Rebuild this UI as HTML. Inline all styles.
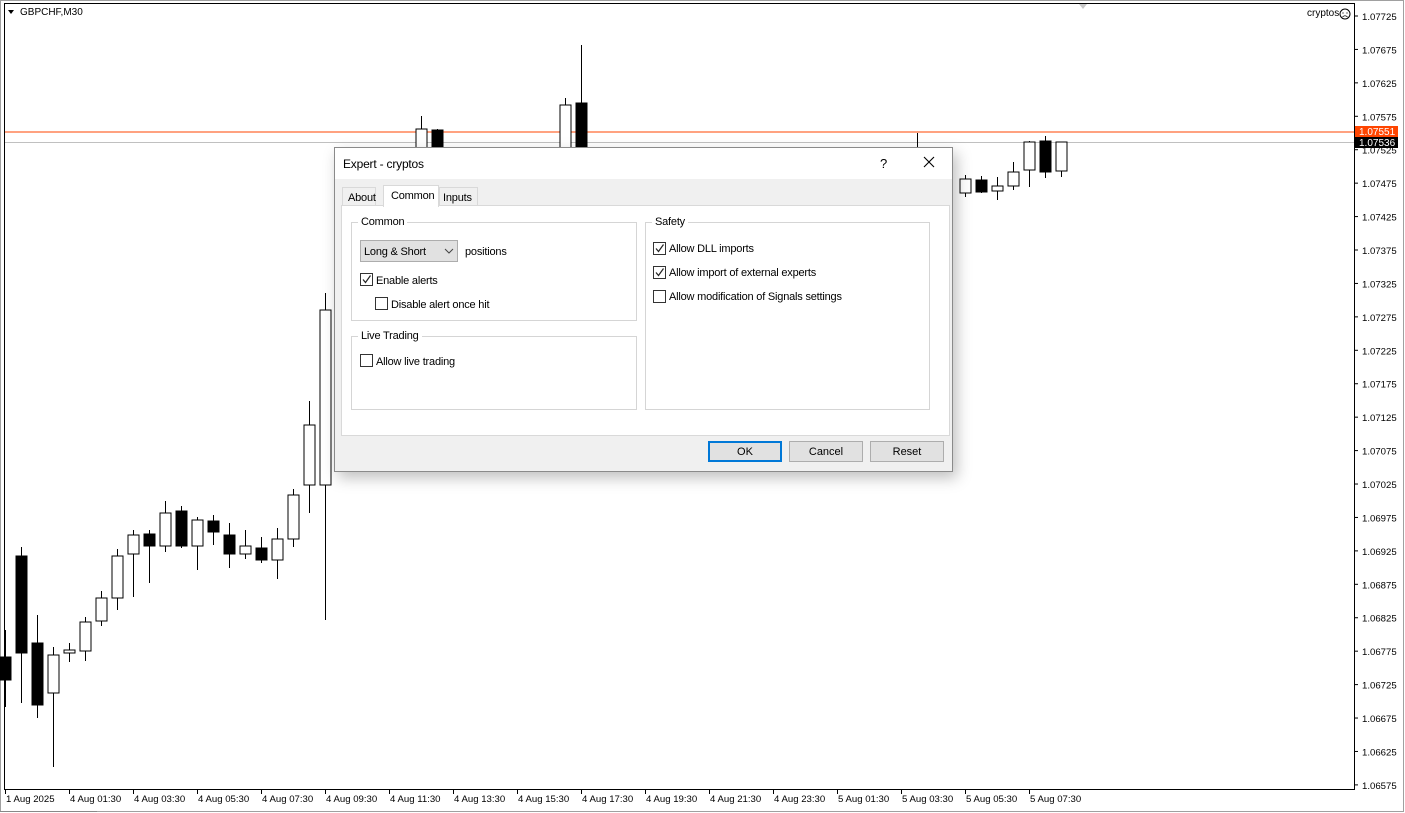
<!DOCTYPE html>
<html><head><meta charset="utf-8"><style>
*{margin:0;padding:0;box-sizing:border-box}
body{width:1405px;height:813px;background:#fff;position:relative;overflow:hidden;font-family:"Liberation Sans",sans-serif}
.t{position:absolute;font-size:12px;color:#000;white-space:nowrap}
.dlg{position:absolute;left:334px;top:147px;width:619px;height:325px;background:#f0f0f0;border:1px solid #8a8a8a;box-shadow:4px 6px 14px rgba(0,0,0,.25)}
.ab{position:absolute;font-size:11px;letter-spacing:-0.2px;color:#000;white-space:nowrap;margin-top:1.5px}
.cb{position:absolute;width:13px;height:13px;border:1px solid #333;background:#fff;margin-top:0}
.cb svg{position:absolute;left:0;top:0}
.grp{position:absolute;border:1px solid #d5d5d5}
.gl{position:absolute;background:#fff;padding:0 3px;font-size:11px;letter-spacing:-0.2px;top:-7px;left:6px}
.btn{position:absolute;top:293px;width:74px;height:21px;border:1px solid #adadad;background:#e1e1e1;font-size:11px;text-align:center;line-height:20px}
</style></head><body>
<svg width="1405" height="813" style="position:absolute;left:0;top:0">
<rect x="0.5" y="0.5" width="1403" height="811" fill="none" stroke="#a0a0a0"/>
<rect x="4.5" y="3.5" width="1350" height="786" fill="none" stroke="#000"/>
<line x1="5" y1="132" x2="1354" y2="132" stroke="#ff4500" stroke-width="1"/>
<line x1="5" y1="142.5" x2="1354" y2="142.5" stroke="#c0c0c0"/>
<polygon points="1079,4 1087,4 1083,9" fill="#c8c8c8"/>
<polygon points="8,10 14,10 11,14" fill="#000"/>
<g stroke="#000" stroke-width="1.3" shape-rendering="crispEdges" id="c"></g>
<g font-family="Liberation Sans, sans-serif" font-size="9.6" fill="#000" id="ax"></g>
<rect x="1355" y="126" width="43" height="11" fill="#ff4500"/>
<text x="1359" y="135" font-family="Liberation Sans, sans-serif" font-size="10" fill="#fff">1.07551</text>
<rect x="1355" y="137" width="43" height="11" fill="#000"/>
<text x="1359" y="146" font-family="Liberation Sans, sans-serif" font-size="10" fill="#fff">1.07536</text>
<circle cx="1345" cy="14" r="5" fill="none" stroke="#000"/>
<circle cx="1343" cy="13" r=".6"/><circle cx="1347" cy="13" r=".6"/>
<path d="M1342.5 17 Q1345 14.5 1347.5 17" fill="none" stroke="#000" stroke-width=".8"/>
<line x1="0" y1="811.5" x2="97" y2="811.5" stroke="#888"/>
</svg>
<div class="t" style="left:20px;top:7px;font-size:10px">GBPCHF,M30</div>
<div class="t" style="left:1307px;top:8px;font-size:10px">cryptos</div>
<script>
var C=[[5,657,680,630,707,1],[21,556,653,547,703,1],[37,643,705,615,718,1],[53,655,693,647,767,0],[69,650,653,643,662,0],[85,622,651,617,661,0],[101,598,621,591,626,0],[117,556,598,549,610,0],[133,535,554,530,597,0],[149,534,546,530,583,1],[165,513,546,501,552,0],[181,511,546,506,548,1],[197,520,546,517,570,0],[213,521,532,515,545,1],[229,535,554,523,568,1],[245,546,554,530,559,0],[261,548,560,537,563,1],[277,539,560,528,579,0],[293,495,539,489,547,0],[309,425,485,401,513,0],[325,310,485,293,620,0],[421,129,160,116,160,0],[437,130,160,129,160,1],[565,105,160,98,160,0],[581,103,160,45,160,1],[917,160,160,133,160,0],[965,179,193,175,197,0],[981,180,192,176,193,1],[997,186,191,177,200,0],[1013,172,186,162,190,0],[1029,142,170,141,187,0],[1045,141,172,136,178,1],[1061,142,171,142,177,0]];
var s='';C.forEach(function(c){var x=c[0]+.5;s+='<line x1="'+x+'" y1="'+c[3]+'" x2="'+x+'" y2="'+c[4]+'"/>';if(c[1]!=c[2])s+='<rect x="'+(c[0]-5)+'" y="'+c[1]+'" width="11" height="'+(c[2]-c[1])+'" fill="'+(c[5]?'#000':'#fff')+'"/>';});
document.getElementById('c').innerHTML=s;
var a='';for(var i=0;i<24;i++){var y=16+i*33.43,v=(1.07725-i*0.0005).toFixed(5);a+='<line x1="1354" y1="'+y+'" x2="1358" y2="'+y+'" stroke="#000"/><text x="1362" y="'+(y+4)+'">'+v+'</text>';}
var L=['1 Aug 2025','4 Aug 01:30','4 Aug 03:30','4 Aug 05:30','4 Aug 07:30','4 Aug 09:30','4 Aug 11:30','4 Aug 13:30','4 Aug 15:30','4 Aug 17:30','4 Aug 19:30','4 Aug 21:30','4 Aug 23:30','5 Aug 01:30','5 Aug 03:30','5 Aug 05:30','5 Aug 07:30'];
L.forEach(function(t,i){var x=5+i*64;a+='<line x1="'+(x+.5)+'" y1="790" x2="'+(x+.5)+'" y2="794" stroke="#000"/><text x="'+(x+1)+'" y="802">'+t+'</text>';});
document.getElementById('ax').innerHTML=a;
</script>
<div class="dlg">
 <div style="position:absolute;left:0;top:0;width:617px;height:31px;background:#fff"></div>
 <div class="ab" style="left:8px;top:7px;font-size:12px;letter-spacing:-0.2px">Expert - cryptos</div>
 <div class="ab" style="left:545px;top:6px;font-size:13px">?</div>
 <svg style="position:absolute;left:588px;top:8px" width="12" height="12"><path d="M1 1L11 11M11 1L1 11" stroke="#000" stroke-width="1.1"/></svg>
 <div style="position:absolute;left:7px;top:39px;width:34px;height:19px;border:1px solid #d9d9d9;border-bottom:none;background:#f0f0f0"></div>
 <div class="ab" style="left:13px;top:42px">About</div>
 <div style="position:absolute;left:104px;top:39px;width:39px;height:19px;border:1px solid #d9d9d9;border-bottom:none;background:#f0f0f0"></div>
 <div class="ab" style="left:108px;top:42px">Inputs</div>
 <div style="position:absolute;left:6px;top:57px;width:609px;height:231px;background:#fff;border:1px solid #d9d9d9"></div>
 <div style="position:absolute;left:48px;top:37px;width:56px;height:22px;border:1px solid #d9d9d9;border-bottom:none;background:#fff"></div>
 <div class="ab" style="left:56px;top:40px">Common</div>
 <div class="grp" style="left:16px;top:74px;width:286px;height:99px"><span class="gl">Common</span></div>
 <div class="grp" style="left:16px;top:188px;width:286px;height:74px"><span class="gl">Live Trading</span></div>
 <div class="grp" style="left:310px;top:74px;width:285px;height:188px"><span class="gl">Safety</span></div>
 <div style="position:absolute;left:25px;top:92px;width:98px;height:22px;background:#e1e1e1;border:1px solid #adadad"></div>
 <div class="ab" style="left:29px;top:96px">Long &amp; Short</div>
 <svg style="position:absolute;left:109px;top:100px" width="10" height="6"><path d="M1 1L5 5L9 1" fill="none" stroke="#444"/></svg>
 <div class="ab" style="left:130px;top:96px">positions</div>
 <div class="cb" style="left:25px;top:125px"><svg width="11" height="11"><path d="M2 5.5L4.5 8.5L9.5 1.5" fill="none" stroke="#222" stroke-width="1.2"/></svg></div>
 <div class="ab" style="left:41px;top:125px">Enable alerts</div>
 <div class="cb" style="left:40px;top:149px"></div>
 <div class="ab" style="left:56px;top:149px">Disable alert once hit</div>
 <div class="cb" style="left:25px;top:206px"></div>
 <div class="ab" style="left:41px;top:206px">Allow live trading</div>
 <div class="cb" style="left:318px;top:94px"><svg width="11" height="11"><path d="M2 5.5L4.5 8.5L9.5 1.5" fill="none" stroke="#222" stroke-width="1.2"/></svg></div>
 <div class="ab" style="left:334px;top:93px">Allow DLL imports</div>
 <div class="cb" style="left:318px;top:118px"><svg width="11" height="11"><path d="M2 5.5L4.5 8.5L9.5 1.5" fill="none" stroke="#222" stroke-width="1.2"/></svg></div>
 <div class="ab" style="left:334px;top:117px">Allow import of external experts</div>
 <div class="cb" style="left:318px;top:142px"></div>
 <div class="ab" style="left:334px;top:141px">Allow modification of Signals settings</div>
 <div class="btn" style="left:373px;border:2px solid #0078d7;line-height:18px">OK</div>
 <div class="btn" style="left:454px">Cancel</div>
 <div class="btn" style="left:535px">Reset</div>
</div>
</body></html>
